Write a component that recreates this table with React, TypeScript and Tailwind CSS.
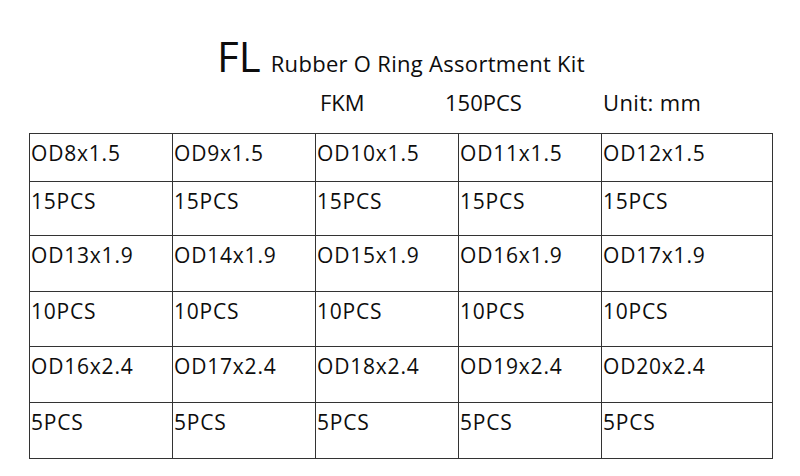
import React from "react";

const rows: { h: string; cells: string[] }[] = [
  { h: "h-[48px]", cells: ["OD8x1.5", "OD9x1.5", "OD10x1.5", "OD11x1.5", "OD12x1.5"] },
  { h: "h-[54px]", cells: ["15PCS", "15PCS", "15PCS", "15PCS", "15PCS"] },
  { h: "h-[56px]", cells: ["OD13x1.9", "OD14x1.9", "OD15x1.9", "OD16x1.9", "OD17x1.9"] },
  { h: "h-[55px]", cells: ["10PCS", "10PCS", "10PCS", "10PCS", "10PCS"] },
  { h: "h-[56px]", cells: ["OD16x2.4", "OD17x2.4", "OD18x2.4", "OD19x2.4", "OD20x2.4"] },
  { h: "h-[56px]", cells: ["5PCS", "5PCS", "5PCS", "5PCS", "5PCS"] },
];

const widths = ["w-[143px]", "w-[143px]", "w-[143px]", "w-[143px]", "w-[171px]"];

export default function App() {
  return (
    <div
      className="w-[800px] h-[476px] bg-white text-[#0d0d0d] overflow-hidden"
      style={{ fontFamily: '"Open Sans", "Noto Sans", sans-serif' }}
    >
      <div className="pt-[35px] flex items-baseline justify-center gap-[10px] pl-[2px]">
        <span className="text-[42px] leading-none font-medium">FL</span>
        <span className="text-[22px] leading-none tracking-[0.3px]">Rubber O Ring Assortment Kit</span>
      </div>
      <div className="mt-[14px] flex pl-[320px] text-[22px] leading-none">
        <span className="w-[125px]">FKM</span>
        <span className="w-[158px]">150PCS</span>
        <span className="tracking-[0.4px]">Unit: mm</span>
      </div>
      <div className="mt-[20px] ml-[29px] flex flex-col w-[744px] border-t border-l border-[#333]">
        {rows.map((r, i) => (
          <div key={i} className={`flex ${r.h}`}>
            {r.cells.map((c, j) => (
              <div
                key={j}
                className={`${widths[j]} border-r border-b border-[#333] pl-[1px] pt-[9px] text-[21px] leading-none tracking-[0.8px]`}
              >
                {c}
              </div>
            ))}
          </div>
        ))}
      </div>
    </div>
  );
}
